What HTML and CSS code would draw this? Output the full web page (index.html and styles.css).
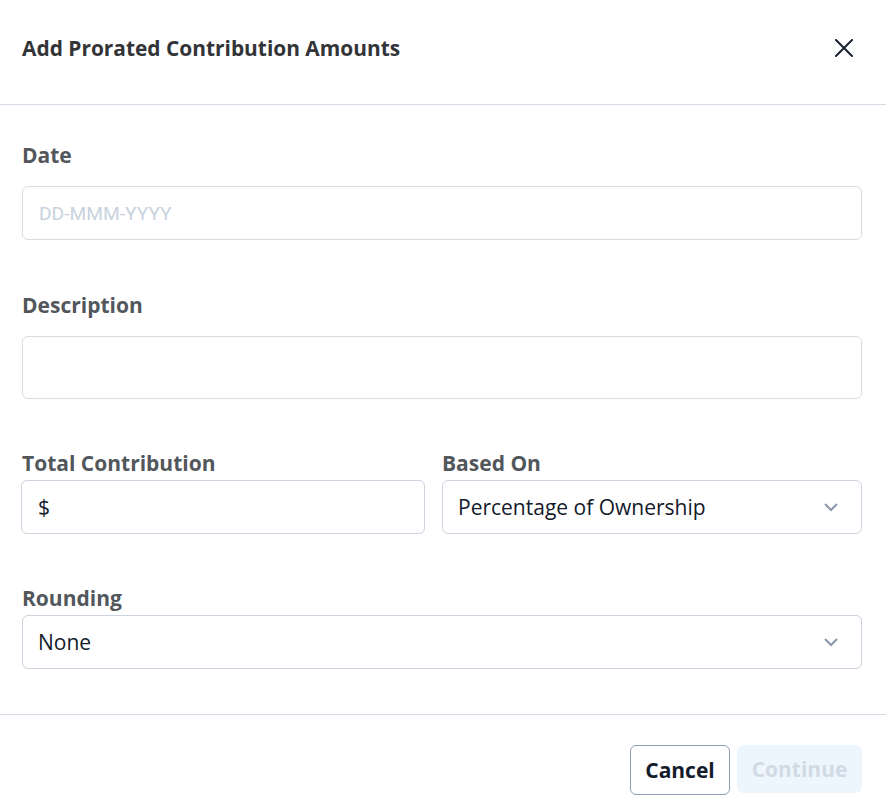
FILE: index.html
```html
<!DOCTYPE html>
<html>
<head>
<meta charset="utf-8">
<link rel="stylesheet" href="styles.css">
</head>
<body>
<div class="modal">
  <div class="header">
    <h1 class="title">Add Prorated Contribution Amounts</h1>
    <button class="close" aria-label="Close">
      <svg width="18" height="18" viewBox="0 0 18 18"><path d="M1 1 L17 17 M17 1 L1 17" stroke="#1b2232" stroke-width="2" fill="none" stroke-linecap="square"/></svg>
    </button>
  </div>
  <div class="body">
    <div class="field">
      <label class="label label-wide">Date</label>
      <div class="input"><span class="placeholder">DD-MMM-YYYY</span></div>
    </div>
    <div class="field gap-top">
      <label class="label label-wide">Description</label>
      <div class="input tall"></div>
    </div>
    <div class="row gap-top2">
      <div class="field">
        <label class="label">Total Contribution</label>
        <div class="input strong first"><span class="value">$</span></div>
      </div>
      <div class="field">
        <label class="label">Based On</label>
        <div class="input strong select"><span class="value">Percentage of Ownership</span>
          <svg class="chev" width="16" height="10" viewBox="0 0 16 10"><path d="M2 2 L8 8 L14 2" stroke="#8a97ab" stroke-width="2" fill="none"/></svg>
        </div>
      </div>
    </div>
    <div class="field gap-top2">
      <label class="label">Rounding</label>
      <div class="input strong select"><span class="value">None</span>
        <svg class="chev" width="16" height="10" viewBox="0 0 16 10"><path d="M2 2 L8 8 L14 2" stroke="#8a97ab" stroke-width="2" fill="none"/></svg>
      </div>
    </div>
  </div>
  <div class="footer">
    <button class="btn btn-cancel">Cancel</button>
    <button class="btn btn-continue">Continue</button>
  </div>
</div>
</body>
</html>
```
FILE: styles.css
```css
* { box-sizing: border-box; }
html, body { margin: 0; padding: 0; background: #fff; }
body { font-family: "Open Sans", "Noto Sans", sans-serif; }
.modal { width: 886px; display: flex; flex-direction: column; }
.header {
  height: 105px;
  border-bottom: 1px solid #d3dce6;
  display: flex;
  align-items: center;
  justify-content: space-between;
  padding: 0 33px 8px 22px;
}
.title { margin: 0; font-size: 20.9px; font-weight: 700; color: #333438; line-height: 28px; }
.close { border: 0; background: none; padding: 0; width: 18px; height: 18px; display: flex; cursor: pointer; }
.body { padding: 37px 24px 0 22px; display: flex; flex-direction: column; }
.field { display: flex; flex-direction: column; }
.gap-top { margin-top: 52px; }
.gap-top2 { margin-top: 51px; }
.label { font-size: 21px; font-weight: 700; color: #52575c; line-height: 26px; margin-bottom: 4px; }
.label-wide { margin-bottom: 18px; }
.input {
  height: 54px;
  border: 1px solid #d6dce3;
  border-radius: 6px;
  display: flex;
  align-items: center;
  padding: 0 16px;
}
.input.tall { height: 63px; }
.input.strong { border-color: #cbd3de; }
.input.first { margin-left: -1px; }
.placeholder { font-family: Roboto, "Noto Sans", sans-serif; font-size: 19.2px; color: #c8d2de; }
.value { font-size: 21px; color: #131a2a; }
.row { display: grid; grid-template-columns: 403px 1fr; column-gap: 17px; }
.select { justify-content: space-between; padding-right: 22px; padding-left: 15px; }
.chev { display: block; }
.footer {
  margin-top: 45px;
  border-top: 1px solid #d3dce6;
  display: flex;
  justify-content: flex-end;
  align-items: flex-start;
  gap: 7px;
  padding: 30px 24px 0 0;
}
.btn { font-family: "Open Sans", "Noto Sans", sans-serif; font-size: 21px; font-weight: 700; border-radius: 6px; height: 50px; cursor: pointer; padding: 0; }
.btn-cancel { width: 100px; background: #fff; border: 1px solid #8f9db6; color: #141b2b; }
.btn-continue { width: 125px; height: 48px; background: #eef6fd; border: 0; color: #d2dae5; }
```
